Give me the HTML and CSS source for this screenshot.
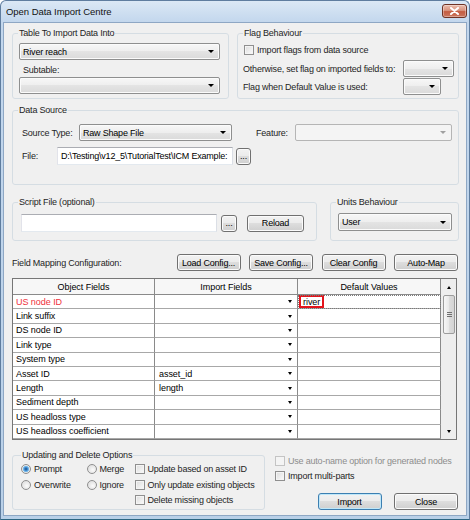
FILE: index.html
```html
<!DOCTYPE html>
<html lang="en">

<head>
    <meta charset="UTF-8">
    <title>Open Data Import Centre</title>
    <link rel="stylesheet" href="styles.css">
</head>

<body>
    <div class="window">
        <div class="titlebar">
            <span class="title">Open Data Import Centre</span>
            <span class="close-btn">
                <svg width="11" height="8" viewBox="0 0 11 8"><path d="M2 1 L9 7 M9 1 L2 7" stroke="#ffffff" stroke-width="2" stroke-linecap="round"/></svg>
            </span>
        </div>

        <div class="client">
            <div class="top-row">
                <fieldset class="group table-group">
                    <legend>Table To Import Data Into</legend>
                    <div class="combo table-combo">River reach</div>
                    <div class="sub-label">Subtable:</div>
                    <div class="combo table-combo"></div>
                </fieldset>
                <fieldset class="group flag-group">
                    <legend>Flag Behaviour</legend>
                    <label class="check flag-check"><span class="box"></span>Import flags from data source</label>
                    <div class="flag-grid">
                        <span>Otherwise, set flag on imported fields to:</span>
                        <div class="combo flag-combo"></div>
                        <span>Flag when Default Value is used:</span>
                        <div class="combo flag-combo short"></div>
                    </div>
                </fieldset>
            </div>

            <fieldset class="group source-group">
                <legend>Data Source</legend>
                <div class="source-row">
                    <span class="type-lbl">Source Type:</span>
                    <div class="combo type-combo">Raw Shape File</div>
                    <span class="feature-lbl">Feature:</span>
                    <div class="combo disabled feature-combo"></div>
                </div>
                <div class="source-row file-row">
                    <span class="file-lbl">File:</span>
                    <div class="textbox file-box">D:\Testing\v12_5\TutorialTest\ICM Example:</div>
                    <button class="btn dots">...</button>
                </div>
            </fieldset>

            <div class="script-row">
                <fieldset class="group script-group">
                    <legend>Script File (optional)</legend>
                    <div class="script-line">
                        <div class="textbox script-box"></div>
                        <button class="btn dots">...</button>
                        <button class="btn reload">Reload</button>
                    </div>
                </fieldset>
                <fieldset class="group units-group">
                    <legend>Units Behaviour</legend>
                    <div class="combo units-combo">User</div>
                </fieldset>
            </div>

            <div class="mapping-bar">
                <span>Field Mapping Configuration:</span>
                <div class="mapping-btns">
                    <button class="btn">Load Config...</button>
                    <button class="btn">Save Config...</button>
                    <button class="btn">Clear Config</button>
                    <button class="btn">Auto-Map</button>
                </div>
            </div>

            <div class="grid">
                <div class="grid-main">
                    <div class="grid-head">
                        <div>Object Fields</div>
                        <div>Import Fields</div>
                        <div>Default Values</div>
                    </div>
                    <div class="grid-row">
                        <div class="cell required">US node ID</div>
                        <div class="cell pick"></div>
                        <div class="cell value current"><span class="edit-box">river</span></div>
                    </div>
                    <div class="grid-row">
                        <div class="cell">Link suffix</div>
                        <div class="cell pick"></div>
                        <div class="cell value"></div>
                    </div>
                    <div class="grid-row">
                        <div class="cell">DS node ID</div>
                        <div class="cell pick"></div>
                        <div class="cell value"></div>
                    </div>
                    <div class="grid-row">
                        <div class="cell">Link type</div>
                        <div class="cell pick"></div>
                        <div class="cell value"></div>
                    </div>
                    <div class="grid-row">
                        <div class="cell">System type</div>
                        <div class="cell pick"></div>
                        <div class="cell value"></div>
                    </div>
                    <div class="grid-row">
                        <div class="cell">Asset ID</div>
                        <div class="cell pick">asset_id</div>
                        <div class="cell value"></div>
                    </div>
                    <div class="grid-row">
                        <div class="cell">Length</div>
                        <div class="cell pick">length</div>
                        <div class="cell value"></div>
                    </div>
                    <div class="grid-row">
                        <div class="cell">Sediment depth</div>
                        <div class="cell pick"></div>
                        <div class="cell value"></div>
                    </div>
                    <div class="grid-row">
                        <div class="cell">US headloss type</div>
                        <div class="cell pick"></div>
                        <div class="cell value"></div>
                    </div>
                    <div class="grid-row">
                        <div class="cell">US headloss coefficient</div>
                        <div class="cell pick"></div>
                        <div class="cell value"></div>
                    </div>
                    <div class="grid-row tail-row">
                        <div class="cell"></div>
                        <div class="cell"></div>
                        <div class="cell"></div>
                    </div>
                </div>
                <div class="vscroll">
                    <div class="sb-btn sb-up"></div>
                    <div class="sb-track"><div class="sb-thumb"></div></div>
                    <div class="sb-btn sb-down"></div>
                </div>
            </div>

            <div class="bottom-row">
                <fieldset class="group update-group">
                    <legend>Updating and Delete Options</legend>
                    <div class="update-grid">
                        <label class="radio"><span class="dot on"></span>Prompt</label>
                        <label class="radio"><span class="dot"></span>Merge</label>
                        <label class="check"><span class="box"></span>Update based on asset ID</label>
                        <label class="radio"><span class="dot"></span>Overwrite</label>
                        <label class="radio"><span class="dot"></span>Ignore</label>
                        <label class="check"><span class="box"></span>Only update existing objects</label>
                        <label class="check last-check"><span class="box"></span>Delete missing objects</label>
                    </div>
                </fieldset>
                <div class="side-panel">
                    <label class="check disabled"><span class="box"></span>Use auto-name option for generated nodes</label>
                    <label class="check"><span class="box"></span>Import multi-parts</label>
                    <div class="actions">
                        <button class="btn default">Import</button>
                        <button class="btn">Close</button>
                    </div>
                </div>
            </div>
        </div>
    </div>
</body>

</html>
```

FILE: styles.css
```css
* {
    box-sizing: border-box;
}

body {
    margin: 0;
    font-family: "Liberation Sans", Arial, sans-serif;
    font-size: 9px;
    letter-spacing: -0.2px;
    color: #1e1e1e;
    background: #ffffff;
}

/* window frame */

.window {
    width: 470px;
    height: 520px;
    display: flex;
    flex-direction: column;
    border: 1px solid #5f7d9f;
    border-bottom-color: #2d6682;
    border-radius: 6px 6px 0 0;
    background: linear-gradient(#dbe8f5, #c3d7ed 21px, #b9d0e8);
    overflow: hidden;
}

.titlebar {
    height: 21px;
    display: flex;
    align-items: center;
    padding-left: 5px;
}

.title {
    font-size: 9.5px;
    letter-spacing: -0.05px;
    color: #111111;
}

.close-btn {
    align-self: flex-start;
    margin: 3px 2px 0 auto;
    width: 25px;
    height: 14px;
    display: flex;
    align-items: center;
    justify-content: center;
    border: 1px solid #6f3325;
    border-radius: 3px;
    background: linear-gradient(#ebbcac, #d99580 45%, #c45c42 55%, #c9775f);
    box-shadow: inset 0 0 0 1px rgba(255, 255, 255, 0.35);
}

.client {
    flex: 1;
    margin: 0 2px 3px;
    border: 1px solid #8ea7c4;
    background: #f0f0f0;
    padding: 4px 7px 0 8px;
}

/* group boxes */

.group {
    margin: 0;
    min-width: 0;
    padding: 0 4px 0 5px;
    border: 1px solid #d5dde3;
    border-radius: 3px;
}

.group legend {
    padding: 0 1px;
    line-height: 12px;
}

/* common controls */

.combo {
    height: 17px;
    display: flex;
    align-items: center;
    padding-left: 3px;
    border: 1px solid #8e8f8f;
    border-radius: 2px;
    background: linear-gradient(#f7f7f7, #eeeeee 50%, #e4e4e4 50%, #dadada);
    box-shadow: inset 0 0 0 1px #fbfbfb;
    color: #000000;
}

.combo::after {
    content: "";
    margin-left: auto;
    margin-right: 5px;
    border-left: 3px solid transparent;
    border-right: 3px solid transparent;
    border-top: 3px solid #000000;
}

.combo.disabled {
    border-color: #b5b5b5;
    background: #f4f4f4;
    box-shadow: none;
}

.combo.disabled::after {
    border-top-color: #a0a0a0;
}

.textbox {
    height: 18px;
    display: flex;
    align-items: center;
    padding-left: 3px;
    border: 1px solid;
    border-color: #abadb3 #dbdfe6 #e3e9ef #e2e3ea;
    background: #ffffff;
    white-space: nowrap;
    overflow: hidden;
    color: #000000;
}

.btn {
    height: 17px;
    padding: 0;
    font: inherit;
    letter-spacing: inherit;
    color: #000000;
    border: 1px solid #707070;
    border-radius: 3px;
    background: linear-gradient(#f2f2f2, #ebebeb 50%, #dddddd 50%, #cfcfcf);
    box-shadow: inset 0 0 0 1px #fbfbfb;
}

.btn.default {
    border-color: #3c7fb1;
    box-shadow: inset 0 0 0 1px #bfe7f9;
}

.btn.dots {
    width: 16px;
    line-height: 10px;
}

.check,
.radio {
    display: flex;
    align-items: center;
    height: 12px;
    white-space: nowrap;
}

.box {
    width: 10px;
    height: 10px;
    margin-right: 3px;
    border: 1px solid #8f8f8f;
    background: linear-gradient(135deg, #dcdcdc, #fbfbfb);
    box-shadow: inset 0 0 0 1px #f4f4f4;
}

.check.disabled {
    color: #8d8d8d;
}

.check.disabled .box {
    border-color: #c4c4c4;
    background: #f4f4f4;
}

.dot {
    width: 10px;
    height: 10px;
    margin-right: 3px;
    border: 1px solid #8f8f8f;
    border-radius: 50%;
    background: radial-gradient(circle at 60% 60%, #fbfbfb, #d6d6d6);
}

.dot.on {
    background: radial-gradient(circle, #1a4c80 0, #3b86cc 1.5px, #8cc8f0 3px, #e9e9e9 3.5px, #d6d6d6);
}

/* top row */

.top-row {
    display: flex;
    gap: 8px;
}

.table-group {
    width: 217px;
    padding-bottom: 4px;
}

.table-combo {
    margin: 4px 0 0 1px;
    width: 201px;
}

.sub-label {
    height: 11px;
    line-height: 11px;
    margin: 5px 0 1px 5px;
}

.sub-label + .table-combo {
    margin-top: 0;
}

.flag-group {
    flex: 1;
    padding-bottom: 3px;
}

.flag-check {
    height: 13px;
    margin: 4px 0 0 1px;
}

.flag-grid {
    display: grid;
    grid-template-columns: 160px auto;
    grid-template-rows: 17px 17px;
    row-gap: 1px;
    align-items: center;
    margin-top: 4px;
}

.flag-combo {
    width: 51px;
}

.flag-combo.short {
    width: 38px;
}

/* data source */

.source-group {
    margin-top: 5px;
    padding-top: 8px;
    padding-bottom: 19px;
}

.source-row {
    display: flex;
    align-items: center;
}

.file-row {
    margin-top: 6px;
}

.type-lbl {
    width: 57px;
    margin-left: 4px;
}

.type-combo {
    width: 153px;
}

.feature-lbl {
    width: 39px;
    margin-left: 24px;
}

.feature-combo {
    width: 157px;
}

.file-lbl {
    width: 35px;
    margin-left: 4px;
}

.file-box {
    width: 176px;
}

.file-row .dots {
    margin-left: 3px;
    width: 15px;
}

/* script file */

.script-row {
    display: flex;
    gap: 13px;
    margin-top: 11px;
}

.script-group {
    width: 305px;
    padding-top: 6px;
    padding-bottom: 8px;
}

.script-line {
    display: flex;
    align-items: center;
}

.script-box {
    width: 196px;
    margin-left: 3px;
}

.script-line .dots {
    margin-left: 4px;
}

.reload {
    width: 57px;
    margin-left: 10px;
}

.units-group {
    flex: 1;
    padding-top: 5px;
}

.units-combo {
    width: 114px;
    height: 18px;
    margin-left: 2px;
}

/* field mapping */

.mapping-bar {
    display: flex;
    align-items: center;
    margin-top: 13px;
}

.mapping-btns {
    display: flex;
    gap: 8.5px;
    margin: 0 1px 0 auto;
}

.mapping-btns .btn {
    width: 64px;
}

.grid {
    display: flex;
    height: 162px;
    margin: 7px 2px 0 0;
    border: 1px solid #767676;
    background: #ffffff;
    overflow: hidden;
    font-size: 9px;
    letter-spacing: -0.05px;
    color: #000000;
}

.grid-main {
    width: 428px;
}

.grid-head,
.grid-row {
    display: grid;
    grid-template-columns: 142px 143px 143px;
}

.grid-head {
    height: 16px;
    border-bottom: 1px solid #8a8a8a;
    background: #f7f7f7;
}

.grid-head div {
    display: flex;
    align-items: center;
    justify-content: center;
    border-right: 1px solid #8a8a8a;
}

.grid-row {
    height: 14.4px;
}

.grid-row.tail-row {
    height: 2px;
}

.tail-row .cell {
    border-bottom: 0;
}

.cell {
    display: flex;
    align-items: center;
    padding-left: 3px;
    border-right: 1px solid #8a8a8a;
    border-bottom: 1px solid #a8a8a8;
    white-space: nowrap;
    overflow: hidden;
}

.cell.required {
    color: #f0303a;
}

.cell.pick {
    padding-left: 4px;
}

.cell.pick::after {
    content: "";
    margin: 0 5px 0 auto;
    border-left: 2.5px solid transparent;
    border-right: 2.5px solid transparent;
    border-top: 3px solid #000000;
}

.cell.value {
    padding-left: 1px;
}

.cell.current {
    outline: 1px dotted #7a7a7a;
    outline-offset: -1px;
}

.edit-box {
    height: 13px;
    width: 25px;
    display: flex;
    align-items: center;
    padding-left: 2px;
    border: 2px solid #e3141c;
}

.vscroll {
    flex: 1;
    display: flex;
    flex-direction: column;
    background: #eeeeee;
}

.sb-btn {
    height: 16px;
    display: flex;
    align-items: center;
    justify-content: center;
}

.sb-up::after,
.sb-down::after {
    content: "";
    border-left: 2.5px solid transparent;
    border-right: 2.5px solid transparent;
}

.sb-up::after {
    border-bottom: 3px solid #000000;
}

.sb-down::after {
    border-top: 3px solid #000000;
}

.sb-track {
    flex: 1;
}

.sb-thumb {
    height: 39px;
    margin: 0 1px 0 2px;
    border: 1px solid #9c9c9c;
    border-radius: 2px;
    background: linear-gradient(to right, #f6f6f6, #e8e8e8 50%, #dcdcdc 50%, #d4d4d4);
    display: flex;
    align-items: center;
    justify-content: center;
}

.sb-thumb::after {
    content: "";
    width: 5px;
    height: 5px;
    background: repeating-linear-gradient(#707070 0 1px, transparent 1px 2px);
}

/* bottom */

.bottom-row {
    display: flex;
    margin-top: 9px;
}

.update-group {
    width: 253px;
    padding: 2px 4px 2px 8px;
}

.update-grid {
    display: grid;
    grid-template-columns: 65.5px 48px auto;
    grid-auto-rows: 13px;
    row-gap: 2.7px;
}

.last-check {
    grid-column: 3;
}

.side-panel {
    flex: 1;
    display: flex;
    flex-direction: column;
    padding: 6px 1px 0 10px;
}

.side-panel .check + .check {
    margin-top: 2.7px;
}

.actions {
    display: flex;
    justify-content: flex-end;
    gap: 12.5px;
    margin-top: 11.5px;
}

.actions .btn {
    width: 64px;
}
```
